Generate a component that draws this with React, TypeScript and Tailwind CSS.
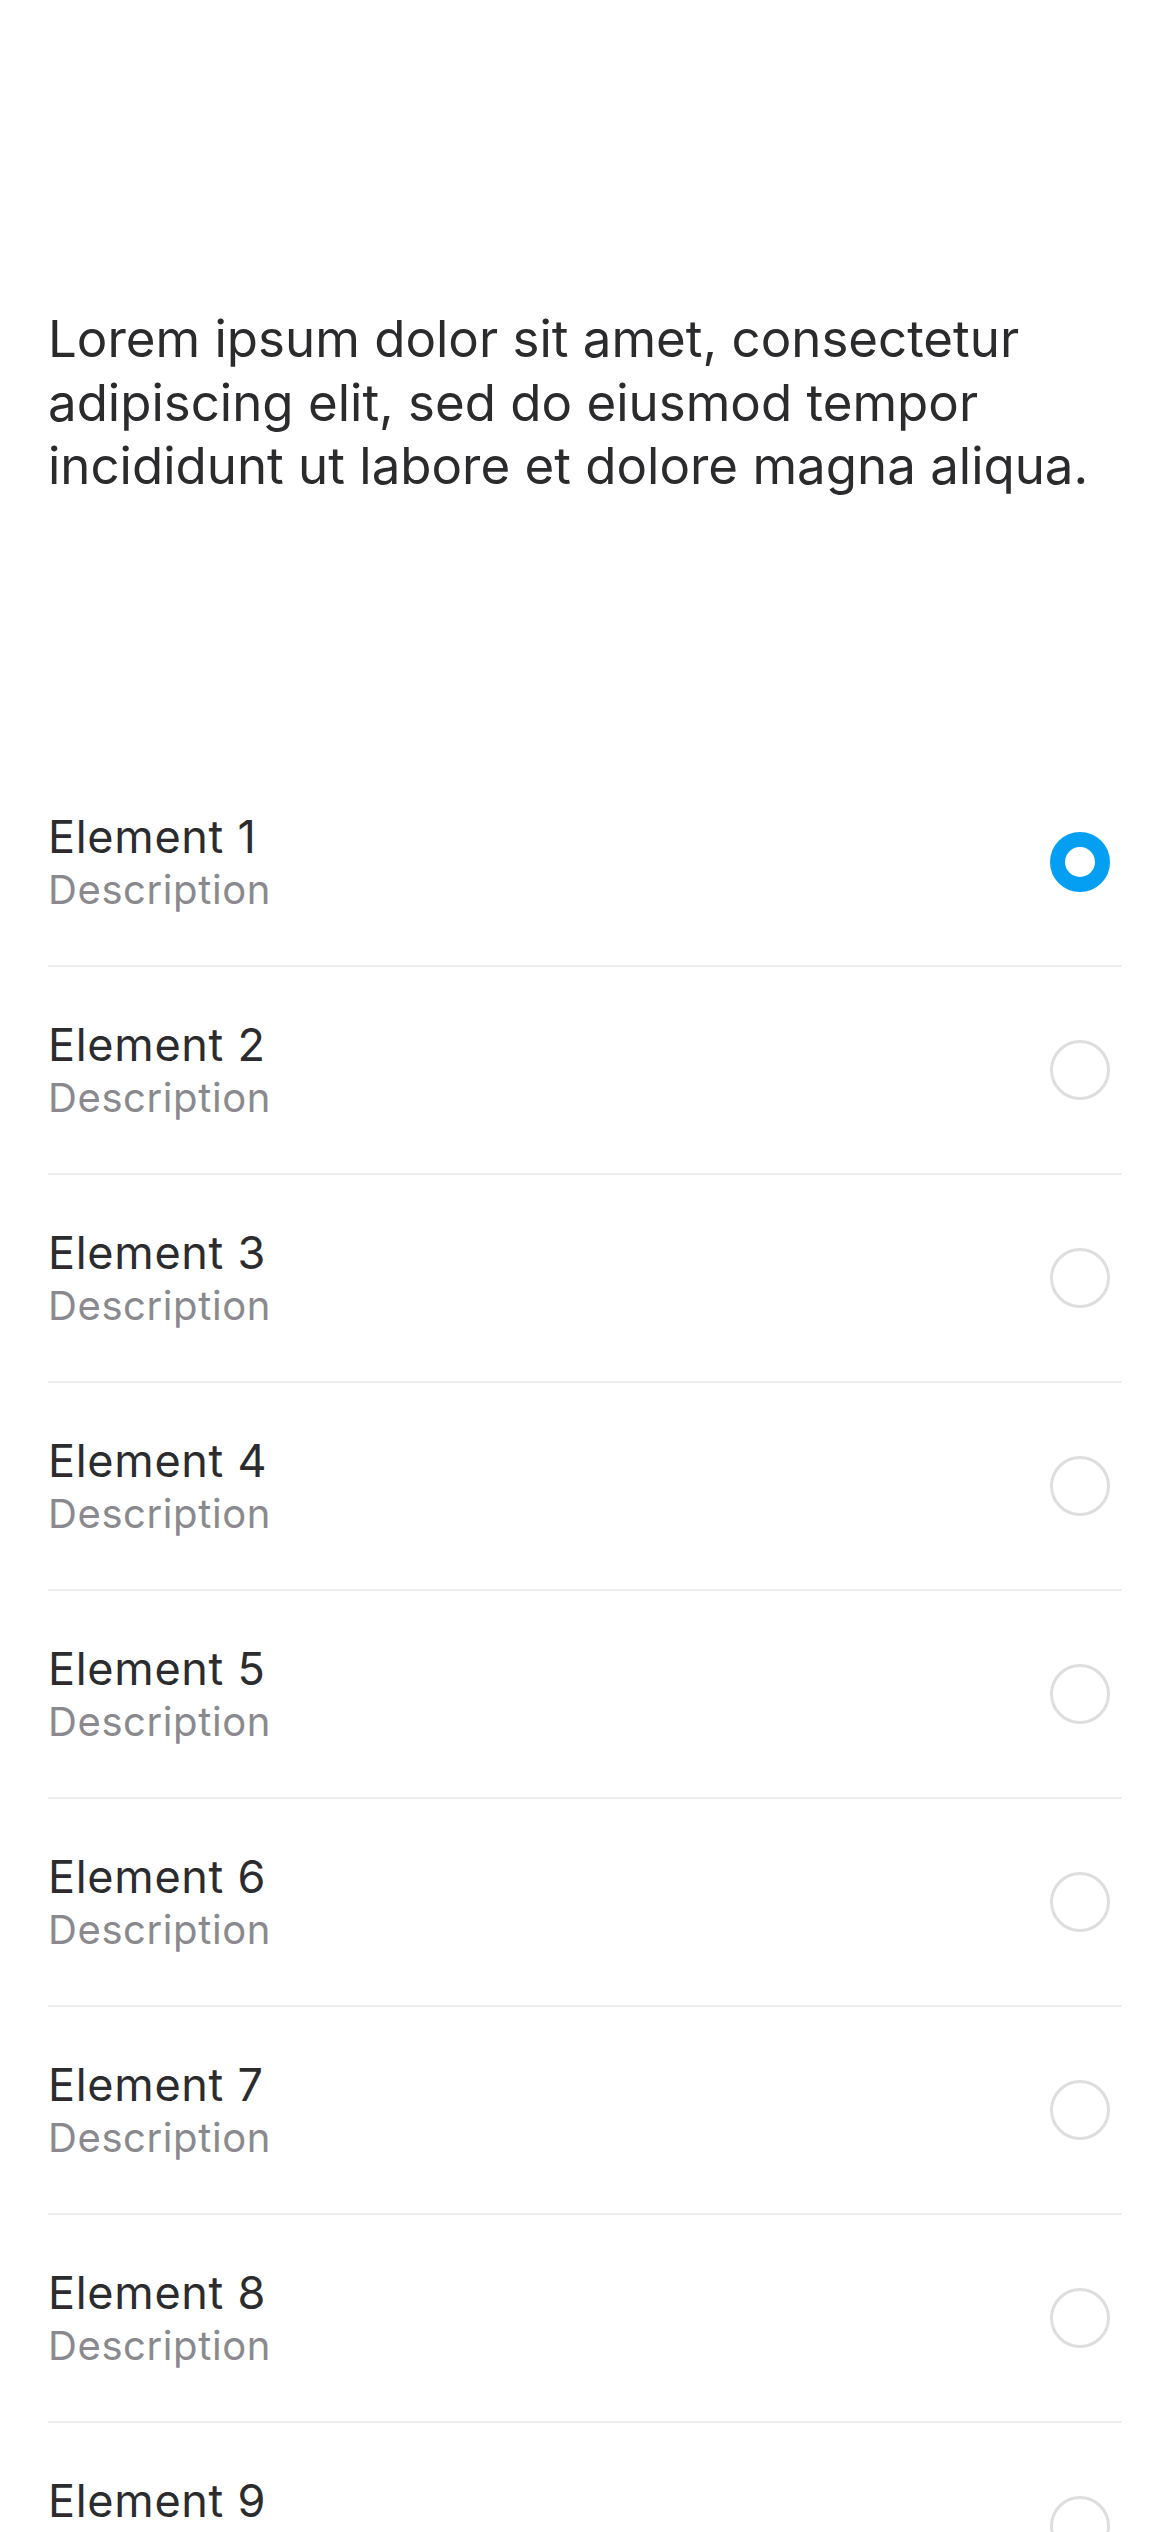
import { useState } from "react";

const items = Array.from({ length: 9 }, (_, i) => ({
  id: i + 1,
  title: `Element ${i + 1}`,
  description: "Description",
}));

function Radio({ checked }: { checked: boolean }) {
  if (checked) {
    return (
      <span className="block w-[60px] h-[60px] rounded-full border-[15px] border-[#049ff2] bg-white" />
    );
  }
  return <span className="block w-[60px] h-[60px] rounded-full border-[3px] border-[#dedede] bg-white" />;
}

export default function App() {
  const [selected, setSelected] = useState(1);

  return (
    <div className="min-h-screen bg-white font-['Inter','Liberation_Sans',sans-serif] antialiased">
      <div className="px-[48px] pt-[307px]">
        <p className="text-[51px] leading-[63.5px] text-[#2b2b2e] whitespace-nowrap">
          Lorem ipsum dolor sit amet, consectetur
          <br />
          adipiscing elit, sed do eiusmod tempor
          <br />
          incididunt ut labore et dolore magna aliqua.
        </p>

        <ul className="mt-[261px]">
          {items.map((item) => (
            <li
              key={item.id}
              onClick={() => setSelected(item.id)}
              className="flex h-[208px] items-center justify-between border-b-2 border-[#ececec] pr-[12px] cursor-pointer"
            >
              <div className="flex flex-col">
                <span className="text-[45px] leading-[56px] text-[#2c2c2e] tracking-[0.7px]">{item.title}</span>
                <span className="text-[40px] leading-[50px] text-[#8a8a8e] tracking-[0.6px]">{item.description}</span>
              </div>
              <Radio checked={selected === item.id} />
            </li>
          ))}
        </ul>
      </div>
    </div>
  );
}
